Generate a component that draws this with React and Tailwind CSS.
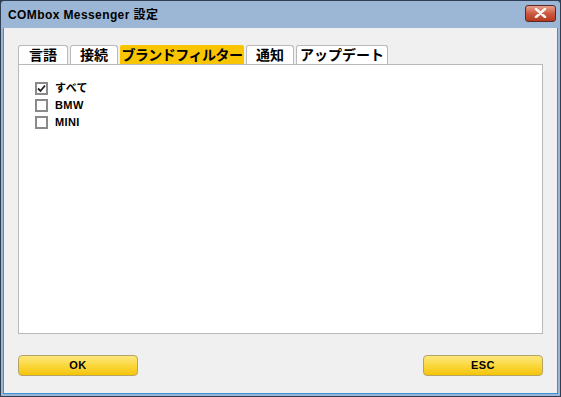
import React from 'react';

const tabs = [
    { label: '言語', w: 'w-[50px]' },
    { label: '接続', w: 'w-[48px]' },
    { label: 'ブランドフィルター', w: 'w-[124px]' },
    { label: '通知', w: 'w-[48px]' },
    { label: 'アップデート', w: 'w-[92px]' },
];
const brands = [
    { label: 'すべて', checked: true },
    { label: 'BMW', checked: false },
    { label: 'MINI', checked: false },
];

const font = { fontFamily: '"Liberation Sans", "Noto Sans CJK JP", sans-serif' };

const Checkbox = ({ checked }) => (
    <div className="w-[13px] h-[13px] border-2 border-[#8a8a8a] bg-white flex items-center justify-center">
        {checked && (
            <svg width="9" height="9" viewBox="0 0 9 9">
                <path d="M1 4.5 L3.5 7 L8 1.5" fill="none" stroke="#222" strokeWidth="1.8" />
            </svg>
        )}
    </div>
);

const YellowButton = ({ children }) => (
    <button className="w-[120px] h-[21px] rounded-[4px] border border-[#b5a46a] bg-gradient-to-b from-[#fde77a] via-[#fbd83a] to-[#f5c400] text-[11px] font-bold text-black tracking-[0.5px]">
        {children}
    </button>
);

export default function App() {
    return (
        <div className="w-[561px] h-[397px] bg-[#2d3e55] p-px" style={font}>
            <div className="w-full h-full bg-[#9cb6d5] flex flex-col rounded-t-[3px]">
                {/* Title bar */}
                <div className="h-[27px] flex items-center justify-between pl-[7px] pr-[4px]">
                    <span className="text-[12px] font-bold text-black tracking-[0.4px]">COMbox Messenger 設定</span>
                    <div className="w-[31px] h-[17px] mb-[3px] rounded-[3px] border border-[#5a2a22] bg-gradient-to-b from-[#e6a090] via-[#cc5a40] to-[#b4381f] flex items-center justify-center">
                        <svg width="13" height="10" viewBox="0 0 13 10">
                            <path d="M2 1 L11 9 M11 1 L2 9" stroke="#f4f4f4" strokeWidth="2.6" strokeLinecap="round" />
                        </svg>
                    </div>
                </div>
                {/* Client area */}
                <div className="flex-1 mx-[2px] mb-[2px] border-b border-l border-r border-[#3f8fd6] bg-[#f0f0f0] flex flex-col px-[14px] pt-[17px]">
                    <div className="flex items-end h-[19px] gap-[2px]">
                        {tabs.map((t, i) => (
                            <div
                                key={t.label}
                                className={
                                    i === 2
                                        ? `${t.w} h-[19px] bg-[#f9c500] text-[14px] font-bold text-black flex items-center justify-center leading-none rounded-t-[2px] tracking-[-0.5px] whitespace-nowrap`
                                        : `${t.w} h-[19px] bg-white border border-b-0 border-[#b9b9b9] rounded-t-[3px] text-[14px] font-bold text-black flex items-center justify-center leading-none whitespace-nowrap`
                                }
                            >
                                {t.label}
                            </div>
                        ))}
                    </div>
                    <div className="h-[270px] w-[525px] bg-white border border-[#b9b9b9] pt-[16px] pl-[16px] flex flex-col gap-[3px]">
                        {brands.map((b) => (
                            <div key={b.label} className="flex items-center gap-[7px] h-[14px]">
                                <Checkbox checked={b.checked} />
                                <span className="text-[11px] font-bold text-black tracking-[0.4px]">{b.label}</span>
                            </div>
                        ))}
                    </div>
                    <div className="flex justify-between mt-[21px]">
                        <YellowButton>OK</YellowButton>
                        <YellowButton>ESC</YellowButton>
                    </div>
                </div>
            </div>
        </div>
    );
}
